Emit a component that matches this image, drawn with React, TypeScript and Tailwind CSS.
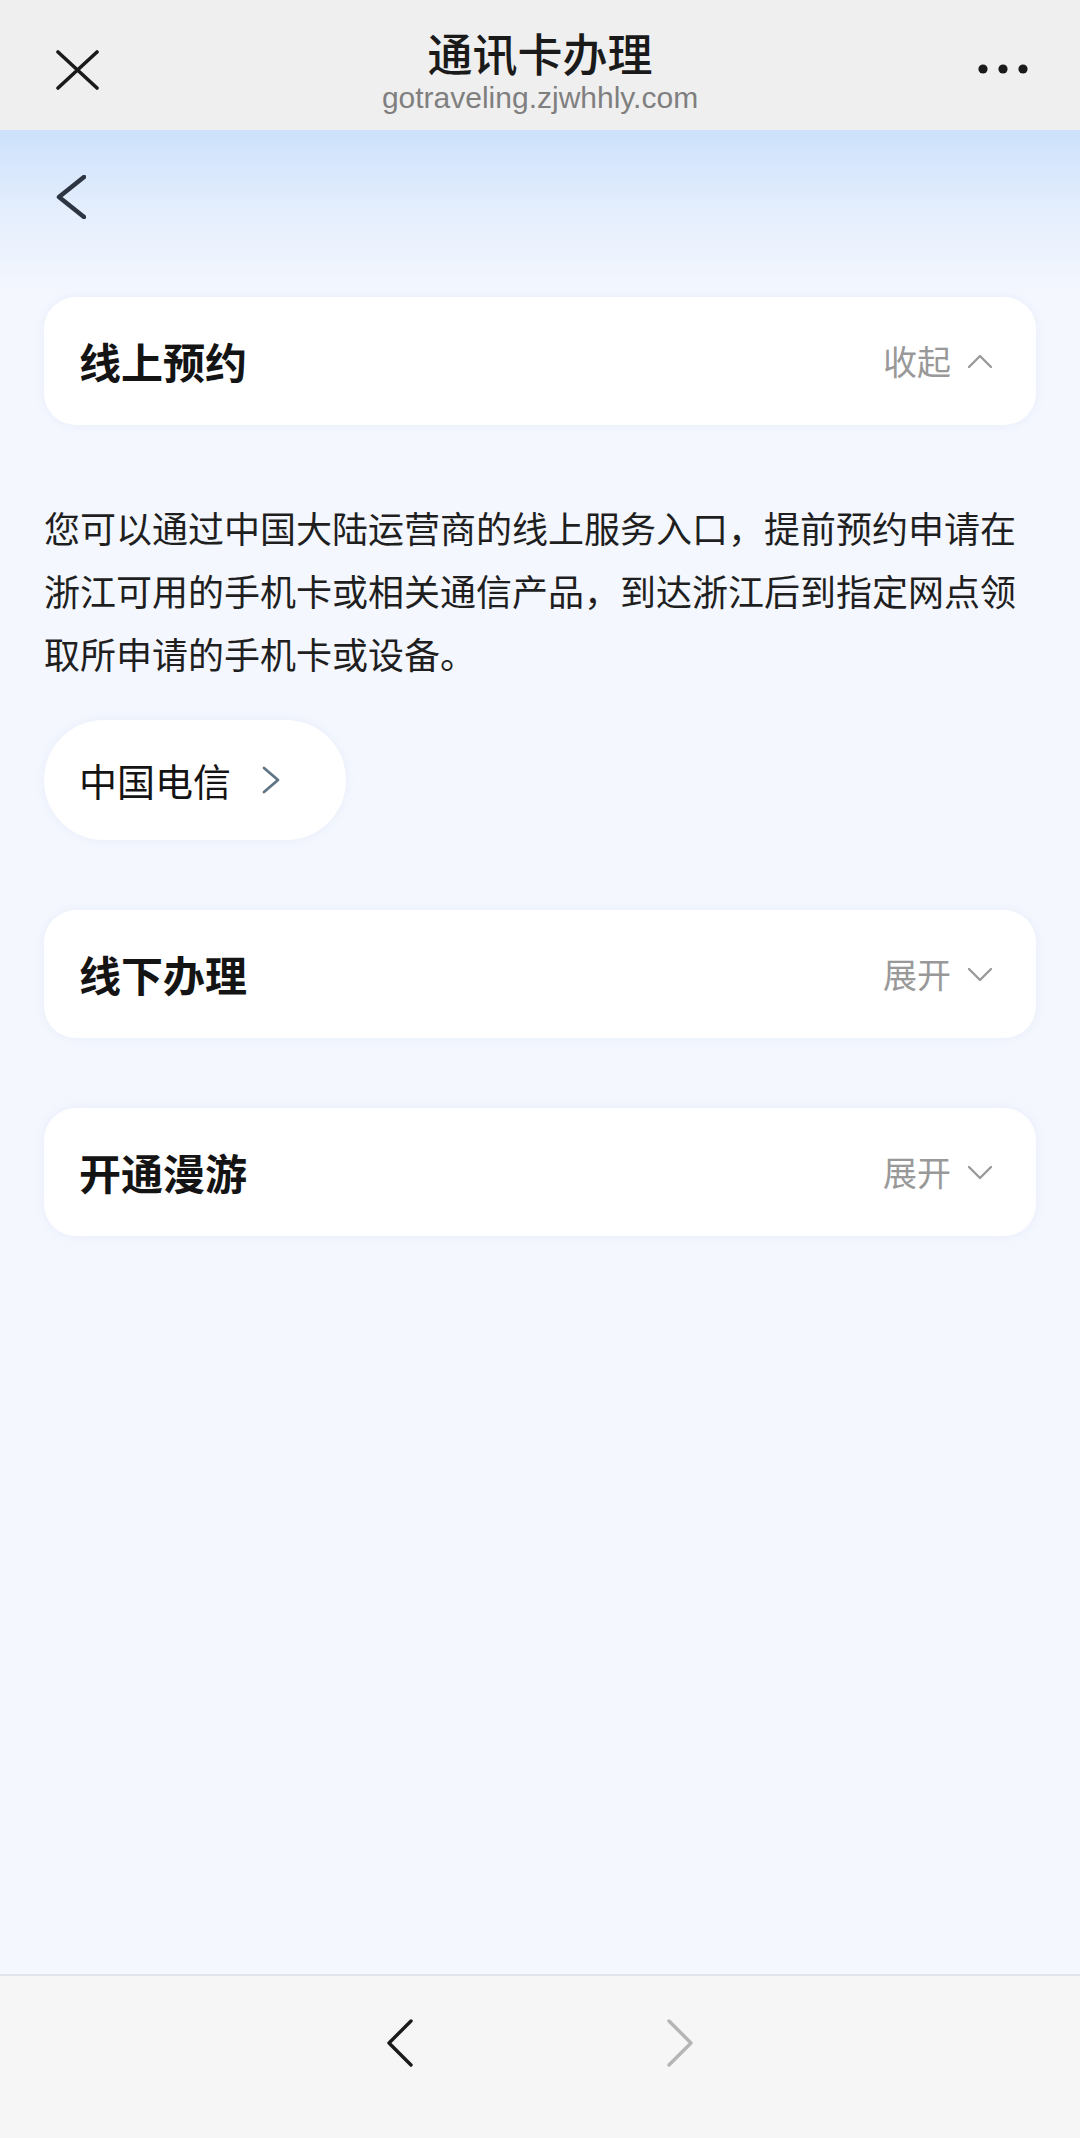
const cjk = { fontFamily: '"Noto Sans CJK SC", "Noto Sans", sans-serif' };

const Chevron = ({ dir, className }: { dir: "up" | "down"; className?: string }) => (
	<svg width="26" height="15" viewBox="0 0 26 15" fill="none" className={className}>
		<path
			d={dir === "up" ? "M2 13 L13 2 L24 13" : "M2 2 L13 13 L24 2"}
			stroke="#9a9a9a"
			strokeWidth="2.4"
			strokeLinecap="round"
			strokeLinejoin="round"
		/>
	</svg>
);

const SectionCard = ({ title, action, open }: { title: string; action: string; open?: boolean }) => (
	<div className="mx-[44px] h-[128px] rounded-[32px] bg-white pl-[35px] pr-[43px] flex items-center justify-between shadow-[0_0_10px_rgba(210,220,240,0.35)]">
		<h2 className="text-[42px] font-bold text-[#141414] leading-none">{title}</h2>
		<div className="flex items-center gap-[16px]">
			<span className="text-[34px] text-[#999999] leading-none">{action}</span>
			<Chevron dir={open ? "up" : "down"} />
		</div>
	</div>
);

const App = () => {
	return (
		<div className="w-[1080px] min-h-[2138px] flex flex-col bg-[#f4f7fe]" style={cjk}>
			{/* top bar */}
			<div className="h-[130px] bg-[#efefef] grid grid-cols-[1fr_auto_1fr] items-start">
				<div className="pl-[56px] pt-[50px]">
					<svg width="43" height="40" viewBox="0 0 43 40" fill="none">
						<path d="M2 2 L41 38 M41 2 L2 38" stroke="#1a1a1a" strokeWidth="3.6" strokeLinecap="round" />
					</svg>
				</div>
				<div className="pt-[28px] flex flex-col items-center">
					<h1 className="text-[45px] leading-[50px] font-medium text-[#1a1a1a]">通讯卡办理</h1>
					<p
						className="mt-[2px] text-[30px] leading-[36px] text-[#7f7f7f]"
						style={{ fontFamily: '"Liberation Sans", Arial, sans-serif' }}
					>
						gotraveling.zjwhhly.com
					</p>
				</div>
				<div className="flex justify-end pr-[52px] pt-[64px]">
					<svg width="50" height="10" viewBox="0 0 50 10">
						<circle cx="5" cy="5" r="4.6" fill="#1a1a1a" />
						<circle cx="25" cy="5" r="4.6" fill="#1a1a1a" />
						<circle cx="45" cy="5" r="4.6" fill="#1a1a1a" />
					</svg>
				</div>
			</div>

			{/* content */}
			<div className="flex-1 bg-[linear-gradient(180deg,#cde1fc_0px,#e4eefd_80px,#f4f7fe_160px)]">
				<div className="h-[167px] pl-[56px] pt-[45px]">
					<svg width="30" height="44" viewBox="0 0 30 44" fill="none">
						<path d="M28 2 L3 22 L28 42" stroke="#2d3442" strokeWidth="4.5" strokeLinecap="round" strokeLinejoin="round" />
					</svg>
				</div>

				<SectionCard title="线上预约" action="收起" open />

				<p className="mx-[44px] mt-[71px] text-[36px] leading-[63px] text-[#1f1f1f]">
					您可以通过中国大陆运营商的线上服务入口，提前预约申请在浙江可用的手机卡或相关通信产品，到达浙江后到指定网点领取所申请的手机卡或设备。
				</p>

				<button className="ml-[44px] mt-[35px] h-[120px] w-[302px] rounded-full bg-white pl-[35px] flex items-center gap-[30px] shadow-[0_0_10px_rgba(210,220,240,0.35)]">
					<span className="text-[38px] text-[#141414] leading-none">中国电信</span>
					<svg width="20" height="28" viewBox="0 0 20 28" fill="none">
						<path d="M3 2 L17 14 L3 26" stroke="#5f7585" strokeWidth="2.8" strokeLinecap="round" strokeLinejoin="round" />
					</svg>
				</button>

				<div className="mt-[70px]">
					<SectionCard title="线下办理" action="展开" />
				</div>
				<div className="mt-[70px]">
					<SectionCard title="开通漫游" action="展开" />
				</div>
			</div>

			{/* bottom nav */}
			<div className="h-[164px] border-t-2 border-[#e2e5ea] bg-[#f6f6f6] flex justify-center gap-[254px] pt-[43px]">
				<svg width="26" height="48" viewBox="0 0 26 48" fill="none">
					<path d="M24 2 L2 24 L24 46" stroke="#1a1a1a" strokeWidth="3.4" strokeLinecap="round" strokeLinejoin="round" />
				</svg>
				<svg width="26" height="48" viewBox="0 0 26 48" fill="none">
					<path d="M2 2 L24 24 L2 46" stroke="#b5b5b5" strokeWidth="3.4" strokeLinecap="round" strokeLinejoin="round" />
				</svg>
			</div>
		</div>
	);
};

export default App;
